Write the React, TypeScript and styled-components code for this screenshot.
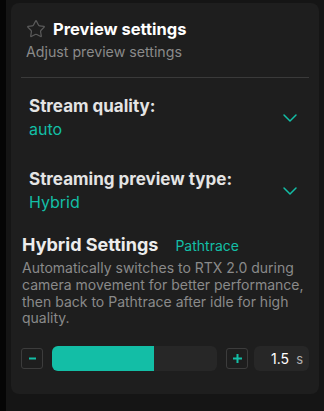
import styled, { createGlobalStyle } from 'styled-components'
import { Star, ChevronDown } from 'lucide-react'

const GlobalStyle = createGlobalStyle`
  html, body {
    margin: 0;
    padding: 0;
    background: #151515;
  }
  body {
    font-family: Inter, "Noto Sans", sans-serif;
  }
`

const teal = '#13bea6'

const Page = styled.div`
  display: flex;
  min-height: 411px;
`

const Edge = styled.div`
  width: 6px;
  background: #050505;
`

const Content = styled.div`
  flex: 1;
  padding: 3px 5px 0 5px;
`

const Panel = styled.section`
  background: #1e1e1e;
  border-radius: 8px;
  padding: 14px 10px 23px;
`

const Header = styled.div`
  padding: 0 5px;
`

const TitleRow = styled.div`
  display: flex;
  align-items: center;
  gap: 7px;
  height: 24px;
  color: #5a5a5a;
`

const Title = styled.h2`
  margin: 0;
  font-size: 16.5px;
  font-weight: 700;
  color: #ffffff;
`

const Subtitle = styled.p`
  margin: 1px 0 0;
  font-size: 14.2px;
  line-height: 20px;
  color: #8a8a8a;
`

const Divider = styled.hr`
  border: none;
  height: 1px;
  background: #3a3a3a;
  margin: 15px 0 0;
`

const Selects = styled.div`
  display: flex;
  flex-direction: column;
  gap: 27px;
  margin-top: 17px;
`

const Select = styled.div`
  display: flex;
  align-items: center;
  justify-content: space-between;
  padding: 0 7px 0 8px;
  cursor: pointer;
`

const SelectText = styled.div`
  display: flex;
  flex-direction: column;
`

const SelectLabel = styled.span`
  font-size: 17px;
  font-weight: 700;
  line-height: 23px;
  color: #e4e4e4;
`

const SelectValue = styled.span`
  font-size: 16px;
  line-height: 23px;
  color: ${teal};
`

const Hybrid = styled.div`
  margin-top: 19px;
`

const HybridHead = styled.div`
  display: flex;
  align-items: baseline;
  gap: 17px;
  padding-left: 1px;
`

const HybridTitle = styled.h3`
  margin: 0;
  font-size: 18px;
  font-weight: 700;
  line-height: 24px;
  color: #ececec;
`

const Mode = styled.span`
  font-size: 14px;
  color: ${teal};
`

const Description = styled.p`
  margin: 3px 0 0;
  padding-left: 1px;
  font-size: 14px;
  line-height: 16.8px;
  color: #8a8a8a;
`

const SliderRow = styled.div`
  display: flex;
  align-items: center;
  height: 25px;
  margin-top: 19px;
`

const StepButton = styled.button<{ $gapAfter: number }>`
  width: 22px;
  height: 21px;
  margin-right: ${p => p.$gapAfter}px;
  padding: 0;
  display: flex;
  align-items: center;
  justify-content: center;
  background: transparent;
  border: 1px solid #3c3c3c;
  border-radius: 3px;
  color: ${teal};
  cursor: pointer;
`

const Track = styled.div`
  flex: 1;
  height: 25px;
  margin-right: 9px;
  background: #272727;
  border-radius: 6px;
  overflow: hidden;
`

const Fill = styled.div`
  height: 100%;
  background: ${teal};
`

const ValueBox = styled.div`
  width: 55px;
  height: 25px;
  display: flex;
  align-items: center;
  justify-content: flex-end;
  gap: 7px;
  padding-right: 6px;
  box-sizing: border-box;
  background: #272727;
  border-radius: 6px;
`

const Value = styled.span`
  font-size: 14px;
  color: #ffffff;
`

const Unit = styled.span`
  font-size: 13px;
  color: #b0b0b0;
`

const MinusIcon = () => (
  <svg width="9" height="9" viewBox="0 0 9 9">
    <line x1="1" y1="4.5" x2="8" y2="4.5" stroke="currentColor" strokeWidth="2" />
  </svg>
)

const PlusIcon = () => (
  <svg width="11" height="11" viewBox="0 0 11 11">
    <line x1="1" y1="5.5" x2="10" y2="5.5" stroke="currentColor" strokeWidth="2" />
    <line x1="5.5" y1="1" x2="5.5" y2="10" stroke="currentColor" strokeWidth="2" />
  </svg>
)

const selects = [
  { label: 'Stream quality:', value: 'auto' },
  { label: 'Streaming preview type:', value: 'Hybrid' },
]

const delay = 1.5
const fillPct = 62

export default function App() {
  return (
    <>
      <GlobalStyle />
      <Page>
        <Edge />
        <Content>
          <Panel>
            <Header>
              <TitleRow>
                <Star size={20} strokeWidth={1.5} />
                <Title>Preview settings</Title>
              </TitleRow>
              <Subtitle>Adjust preview settings</Subtitle>
            </Header>
            <Divider />
            <Selects>
              {selects.map(s => (
                <Select key={s.label}>
                  <SelectText>
                    <SelectLabel>{s.label}</SelectLabel>
                    <SelectValue>{s.value}</SelectValue>
                  </SelectText>
                  <ChevronDown size={24} strokeWidth={1.5} color={teal} />
                </Select>
              ))}
            </Selects>
            <Hybrid>
              <HybridHead>
                <HybridTitle>Hybrid Settings</HybridTitle>
                <Mode>Pathtrace</Mode>
              </HybridHead>
              <Description>
                Automatically switches to RTX 2.0 during camera movement for better
                performance, then back to Pathtrace after idle for high quality.
              </Description>
              <SliderRow>
                <StepButton $gapAfter={9}>
                  <MinusIcon />
                </StepButton>
                <Track>
                  <Fill style={{ width: `${fillPct}%` }} />
                </Track>
                <StepButton $gapAfter={6}>
                  <PlusIcon />
                </StepButton>
                <ValueBox>
                  <Value>{delay}</Value>
                  <Unit>s</Unit>
                </ValueBox>
              </SliderRow>
            </Hybrid>
          </Panel>
        </Content>
      </Page>
    </>
  )
}
